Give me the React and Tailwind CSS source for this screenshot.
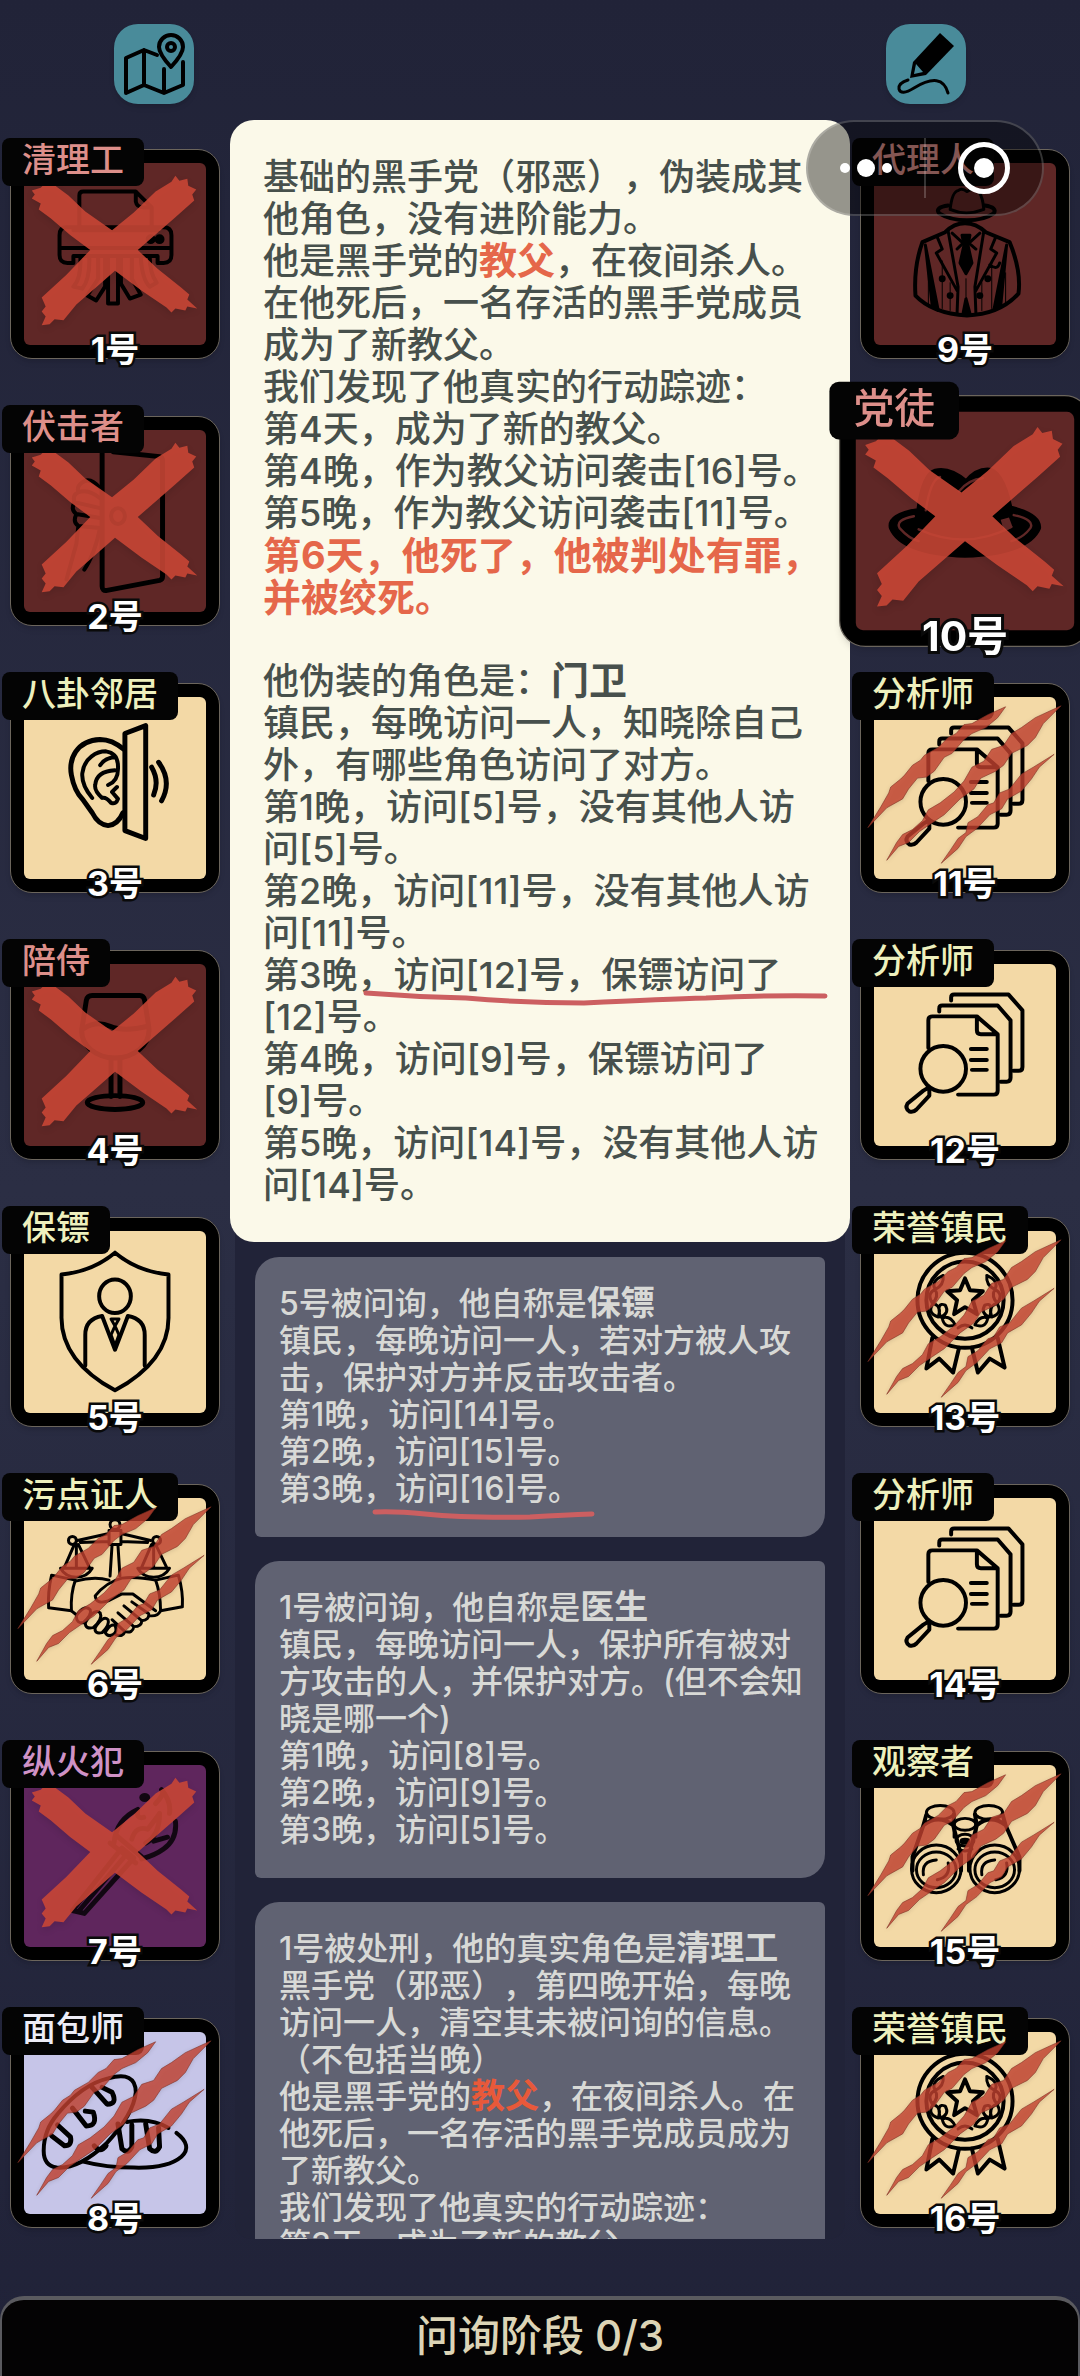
import React, { useState } from "react";
import clsx from "clsx";

const TONES = {
	mafia: { tile: "bg-[#5f2726]", text: "text-[#dd8f8a]" },
	town: { tile: "bg-[#f3d9a6]", text: "text-[#eef0bd]" },
	arson: { tile: "bg-[#5f265d]", text: "text-[#cf92c6]" },
	baker: { tile: "bg-[#c6c5e8]", text: "text-[#ececf6]" },
};

const LEFT = [
	{ no: 1, role: "清理工", tone: "mafia", mark: "cross", icon: Shredder },
	{ no: 2, role: "伏击者", tone: "mafia", mark: "cross", icon: Door },
	{ no: 3, role: "八卦邻居", tone: "town", icon: Ear },
	{ no: 4, role: "陪侍", tone: "mafia", mark: "cross", icon: Wine },
	{ no: 5, role: "保镖", tone: "town", icon: Guard },
	{ no: 6, role: "污点证人", tone: "town", mark: "claw", icon: Handshake },
	{ no: 7, role: "纵火犯", tone: "arson", mark: "cross", icon: Torch },
	{ no: 8, role: "面包师", tone: "baker", mark: "claw", icon: Bread },
];

const RIGHT = [
	{ no: 9, role: "代理人", tone: "mafia", icon: Suit },
	{ no: 10, role: "党徒", tone: "mafia", mark: "cross", icon: Hat },
	{ no: 11, role: "分析师", tone: "town", mark: "claw", icon: Files },
	{ no: 12, role: "分析师", tone: "town", icon: Files },
	{ no: 13, role: "荣誉镇民", tone: "town", mark: "claw", icon: Medal },
	{ no: 14, role: "分析师", tone: "town", icon: Files },
	{ no: 15, role: "观察者", tone: "town", mark: "claw", icon: Binoculars },
	{ no: 16, role: "荣誉镇民", tone: "town", mark: "claw", icon: Medal },
];

function Shredder() {
	return (
		<g>
			<path d="M69 81V46Q69 42 73 42H126L142 58V81M126 42V52Q127 58 134 58H142" />
			<path d="M63 81H148M56 78H154Q162 78 162 86V106Q162 114 154 114H148V107H63V114H57Q49 114 49 106V86Q49 78 56 78M49 99H162" />
			<path d="M70 107Q71 130 63 138L72 140Q80 130 79 107M88 107V130L77 147L86 152L95 138V107M98 107V155H108V107M111 107V135L120 150L131 146L122 130V107M131 107Q132 130 140 138L147 134Q140 124 140 107" />
			<circle cx="141" cy="90" r="3" fill="#000" />
			<circle cx="150" cy="90" r="3" fill="#000" />
		</g>
	);
}

function Door() {
	return (
		<g>
			<path strokeWidth="5" d="M92 33V171Q92 176 97 175L150 165Q153 164 153 161V44Q153 41 150 40L103 35" />
			<ellipse cx="108" cy="100" rx="7" ry="8" />
			<path d="M90 72Q80 60 72 66Q66 70 68 76Q62 78 64 86L90 92M68 76Q78 72 90 82M64 86Q60 94 66 98L90 102M66 98Q62 106 68 110L90 112M68 110L66 128L56 164M90 112Q84 140 74 154" />
		</g>
	);
}

function Ear() {
	return (
		<g>
			<path strokeWidth="5" d="M114 66Q102 56 90 56C66 57 58 76 61 92Q64 108 72 116L82 130Q88 142 98 143Q108 142 113 130" />
			<path d="M82 115Q71 102 72 90C74 74 87 68 96 68Q109 70 108 86Q108 98 98 102M107 104L102 109L108 116Q106 122 101 120Q96 114 92 115Q84 108 85 102Q86 88 105 87M90 82Q95 74 106 74" />
			<path strokeWidth="5" d="M115 50L136 42V156L115 148Z" />
			<path strokeWidth="5" d="M142 84Q150 98 144 112M149 79Q163 98 152 118" />
		</g>
	);
}

function Wine() {
	return (
		<g strokeWidth="5">
			<path d="M82 45H130Q134 45 135 50L139 76C142 96 122 108 105 108S68 96 72 76L76 50Q77 45 82 45Z" />
			<path d="M74 78Q86 70 100 76T138 76M101 110V147M110 110V147" />
			<ellipse cx="105" cy="153" rx="28" ry="7" />
		</g>
	);
}

function Guard() {
	return (
		<g>
			<path d="M105 35Q82 54 51 57V99Q50 144 105 174Q160 144 159 99V57Q128 54 105 35Z" />
			<ellipse cx="105" cy="79" rx="16" ry="17" />
			<path d="M75 149V118Q75 102 92 99L105 133L118 99Q135 102 135 118V149" />
			<path strokeWidth="3" d="M101 102H109L105 109ZM105 109L101 118L105 129L109 118Z" />
		</g>
	);
}

function Handshake() {
	return (
		<g strokeWidth="3">
			<circle cx="105" cy="40" r="5" />
			<path d="M99 46H111V60H99ZM102 61L100 92M108 61L110 92M99 49L67 56M111 49L141 56M99 57L70 58M111 57L138 58" />
			<circle cx="62" cy="56" r="4" />
			<circle cx="147" cy="56" r="4" />
			<path d="M64 60L54 83M66 60V83M68 60L79 83M50 84H82Q77 93 66 93T50 84ZM142 60L132 83M144 60V83M146 60L157 83M128 84H160Q155 93 144 93T128 84Z" />
			<path d="M41 91Q37 108 38 124L61 127Q60 110 65 96ZM169 91Q174 108 173 123L151 127Q151 110 146 96Z" />
			<path d="M65 97Q84 92 99 96M146 96Q126 92 112 94Q96 98 85 112Q86 121 98 117L112 110L123 110L146 127M61 127L66 131M66 132Q74 120 80 126Q82 131 73 139Q66 140 66 132M75 139Q84 124 90 129Q93 135 83 144Q75 146 75 139M85 144Q93 131 98 136Q100 141 92 149Q84 151 85 144M95 149Q101 139 105 142Q108 148 103 151Q98 154 95 149M106 151Q113 154 115 148L102 136M115 148Q123 150 124 143L108 129M124 143Q132 143 132 137L114 122M132 137Q140 136 139 130L122 118M140 132Q148 133 151 127" />
		</g>
	);
}

function Torch() {
	return (
		<g strokeWidth="5" opacity="0.8">
			<path d="M62 160L112 97L124 107L74 163ZM100 92L126 112M106 84L132 106M69 160L116 104" />
			<path d="M104 92Q106 68 128 58Q126 68 134 66M146 52Q156 42 152 38Q162 50 160 62M166 70Q168 88 154 98Q146 104 132 108M122 88Q126 74 138 78Q146 68 150 62Q150 84 136 92M158 86L144 90" />
			<ellipse cx="135" cy="46" rx="3" ry="2" />
		</g>
	);
}

function Bread() {
	return (
		<g>
			<path d="M33 133Q33 112 47 96Q72 66 98 60Q126 52 126 74Q124 96 96 126Q68 152 46 150Q33 148 33 133Z" />
			<path strokeWidth="5" d="M41 118L54 128Q62 128 60 119L47 107M62 90L76 108Q88 108 83 94L75 93M81 68L97 86Q108 86 102 74L92 69M108 106L112 131Q118 137 122 129V107M136 106L140 131Q146 137 150 129L149 110M84 128Q90 136 96 128" />
			<path d="M117 104Q140 99 159 110M167 115Q184 128 172 139Q158 151 124 150Q96 150 73 144" />
		</g>
	);
}

function Suit() {
	return (
		<g strokeWidth="3">
			<path d="M90 60Q92 42 98 41Q102 38 107 42Q114 37 119 42Q123 48 124 60Q106 67 90 60" />
			<path strokeWidth="4" d="M88 56Q74 58 79 64Q90 71 107 71T134 64Q138 58 125 56" />
			<path strokeWidth="4" d="M85 83Q94 74 105 74T126 83L150 93Q162 122 159 145Q140 166 107 167Q72 165 55 147Q53 118 62 93Z" />
			<path fill="#000" d="M65 96L78 162L72 158ZM147 96L134 162L141 158Z" />
			<path d="M88 82L98 138L97 165M124 82L115 138L116 165M77 88L82 100L76 104L97 142M136 88L131 100L137 104L116 142M92 84L103 94L97 100M120 84L109 94L116 100M130 116Q138 122 140 114" />
			<path fill="#000" d="M102 86H110L108 96L112 114L106 125L100 114L104 96ZM106 150L103 165H110Z" />
			<path strokeWidth="1" d="M68 124V156M82 112V160M90 134V162M122 134V162M132 112V160M146 124V156M106 130V148" />
			<circle cx="82" cy="130" r="2" fill="#000" />
			<circle cx="128" cy="130" r="2" fill="#000" />
			<circle cx="90" cy="147" r="2" fill="#000" />
			<circle cx="120" cy="147" r="2" fill="#000" />
		</g>
	);
}

function Hat() {
	return (
		<g>
			<path fill="#000" d="M66 96Q40 100 43 111Q52 132 105 134Q158 132 167 111Q168 100 143 94Q136 62 124 62Q114 62 106 72Q92 60 80 63Q70 66 66 96Z" />
			<path stroke="#5f2726" strokeWidth="2" d="M62 101Q46 104 50 111Q58 120 66 122M146 100Q164 104 160 111Q154 119 144 122M72 96Q76 70 84 68M100 80Q108 70 120 69M66 112Q106 130 144 110" />
			<path fill="#5f2726" stroke="none" d="M135 104L142 102L145 110L138 114Z" />
		</g>
	);
}

function Files() {
	return (
		<g>
			<path d="M68 98V70Q68 66 72 66H117L138 84V141Q138 145 134 145H98M117 66V80Q117 84 121 84H138" />
			<path d="M79 61V58Q79 55 82 55H138L151 70V128Q151 132 147 132H141M91 50V47Q91 44 94 44H149L163 60V117Q163 121 159 121H154M111 99H127M111 110H127M112 120H127" />
			<circle cx="83" cy="119" r="23" />
			<path d="M68 138L63 141L47 154Q44 159 49 162Q53 163 56 160L69 146V140" />
		</g>
	);
}

function Medal() {
	return (
		<g>
			<circle cx="105" cy="83" r="48" />
			<circle cx="105" cy="83" r="39" />
			<path d="M105 61L110 73L123 74L113 83L117 97L105 90L94 97L97 83L87 74L100 73Z" />
			<path strokeWidth="3" d="M83 58Q70 64 75 72Q84 68 83 58M75 72Q66 76 72 86Q79 80 75 72M73 86Q66 96 78 100Q82 90 73 86M80 100Q76 84 85 88Q90 96 80 100M82 101Q84 112 95 108Q90 98 82 101M127 58Q140 64 135 72Q126 68 127 58M135 72Q144 76 138 86Q131 80 135 72M137 86Q144 96 132 100Q128 90 137 86M130 100Q134 84 125 88Q120 96 130 100M128 101Q126 112 115 108Q120 98 128 101M98 111Q105 105 112 111" />
			<path d="M72 121L66 152L79 142L93 156L99 131M112 131L118 156L130 142L145 151L138 121" />
		</g>
	);
}

function Binoculars() {
	return (
		<g strokeWidth="3">
			<ellipse cx="80" cy="61" rx="14" ry="7" />
			<ellipse cx="129" cy="61" rx="14" ry="7" />
			<path strokeWidth="4" d="M66 63L63 74L52 106V120M94 63L93 74L101 104V120M115 63L117 74L109 104V120M143 63L146 74L160 106V120M63 74Q78 62 93 74M117 74Q131 62 146 74" />
			<ellipse cx="76" cy="118" rx="25" ry="24" />
			<ellipse cx="76" cy="119" rx="20" ry="18" />
			<path d="M63 124Q61 110 76 109M88 112Q91 126 77 129" />
			<ellipse cx="135" cy="118" rx="25" ry="24" />
			<ellipse cx="135" cy="119" rx="20" ry="18" />
			<path d="M122 124Q120 110 135 109M147 112Q150 126 136 129" />
			<ellipse cx="105" cy="73" rx="11" ry="6" />
			<ellipse cx="105" cy="89" rx="9" ry="6" />
			<ellipse cx="105" cy="90" rx="4" ry="2" fill="#000" />
			<path d="M94 73V86M116 73V86M98 98Q105 102 112 98" />
		</g>
	);
}

function CrossMark() {
	return (
		<svg viewBox="0 0 210 210" className="absolute inset-0 size-full drop-shadow-md" aria-hidden="true">
			<path
				fill="#cb4736"
				fillOpacity="0.88"
				d="M21 49L24 45L21 41L30 38L35 33L38 36L42 34L58 46L75 62L102 81L124 63L146 42L162 32L166 26L170 31L178 29L179 36L187 40L183 45L185 51L166 68L128 101L148 120L172 139L180 146L178 151L188 160L178 158L176 162L166 160L162 164L157 159L132 142L105 122L82 142L66 156L53 172L44 171L39 176L31 177L35 168L31 163L35 158L31 149L56 126L80 101L60 86L40 69L28 60L30 54Z"
			/>
		</svg>
	);
}

function ClawMark() {
	return (
		<svg viewBox="0 0 210 210" className="absolute inset-0 size-full drop-shadow-sm" aria-hidden="true">
			<g fill="#c2412f" fillOpacity="0.8" stroke="#7e3024" strokeOpacity="0.6">
				<path d="M7 145L20 124L28 110L30 104L40 96L44 92L52 82L60 77L64 72L78 64L88 54L96 50L104 41L112 40L128 31L146 23L138 34L126 44L112 50L104 56L92 70L84 74L74 88L66 94L57 95L48 106L42 116L26 125Z" />
				<path d="M26 178L36 160L42 152L52 147L62 138L68 127L80 120L94 109L104 98L112 84L124 78L132 66L144 62L152 50L162 44L176 34L202 22L184 40L176 54L168 62L152 70L144 82L136 88L121 95L114 106L100 116L84 132L72 140L59 149L48 160L38 164Z" />
				<path d="M81 181L90 168L98 156L106 150L108 140L118 134L128 122L134 120L140 110L150 106L162 91L174 84L195 71L180 84L172 96L162 108L148 116L142 126L130 132L117 146L106 154L98 166Z" />
			</g>
		</svg>
	);
}

function PlayerCard({ player, active, onSelect }) {
	const tone = TONES[player.tone];
	const Icon = player.icon;

	return (
		<button
			type="button"
			onClick={() => onSelect(player.no)}
			className={clsx(
				"relative block size-[210px] shrink-0 rounded-[22px] border border-[#6b655c] bg-black p-[13px] shadow-md",
				active && "z-20 scale-120"
			)}>
			<span className={clsx("block size-full rounded-md", tone.tile)}></span>
			<svg
				viewBox="0 0 210 210"
				className="absolute inset-0 size-full"
				fill="none"
				stroke="#000"
				strokeWidth="4"
				strokeLinecap="round"
				strokeLinejoin="round"
				aria-hidden="true">
				<Icon />
			</svg>
			{player.mark === "cross" && <CrossMark />}
			<span className={clsx("absolute -top-3 -left-[9px] h-12 rounded-lg bg-[#040404] px-5 text-[34px] leading-[44px] whitespace-nowrap", tone.text)}>
				{player.role}
			</span>
			{player.mark === "claw" && <ClawMark />}
			<span className="absolute inset-x-0 -bottom-3 text-center text-[34px] leading-10 font-bold text-white [paint-order:stroke_fill] [-webkit-text-stroke:5px_#0a0a0a]">
				{player.no}号
			</span>
		</button>
	);
}

function PlayerColumn({ players, active, onSelect }) {
	return (
		<div className="flex w-[230px] shrink-0 flex-col items-center gap-[57px] pt-[29px]">
			{players.map((player) => (
				<PlayerCard key={player.no} player={player} active={player.no === active} onSelect={onSelect} />
			))}
		</div>
	);
}

function Underline({ d, className }) {
	return (
		<svg className={clsx("absolute overflow-visible", className)} fill="none" stroke="#cc5f61" strokeWidth="5" strokeLinecap="round" aria-hidden="true">
			<path d={d} />
		</svg>
	);
}

function LogCard({ children }) {
	return (
		<article className="relative shrink-0 rounded-md rounded-tl-3xl rounded-br-3xl bg-[#606272] pt-7 pr-5 pb-[30px] pl-6 text-[32px] leading-[37px] text-[#d8d9d6]">
			{children}
		</article>
	);
}

function Detail() {
	return (
		<section className="relative z-10 rounded-3xl bg-[#fbf9e9] pt-9 pr-7 pb-9 pl-[33px] text-4xl leading-[42px] text-[#47504c]">
			<p>基础的黑手党（邪恶），伪装成其他角色，没有进阶能力。</p>
			<p>
				他是黑手党的<b className="text-[38px] leading-none text-[#e5674a]">教父</b>，在夜间杀人。
			</p>
			<p>在他死后，一名存活的黑手党成员成为了新教父。</p>
			<p>我们发现了他真实的行动踪迹：</p>
			<p>第4天，成为了新的教父。</p>
			<p>第4晚，作为教父访问袭击[16]号。</p>
			<p>第5晚，作为教父访问袭击[11]号。</p>
			<p className="text-[38px] leading-[42px] font-bold text-[#e5674a]">第6天，他死了，他被判处有罪，并被绞死。</p>
			<br />
			<p>
				他伪装的角色是：<b className="text-[38px] leading-none">门卫</b>
			</p>
			<p>镇民，每晚访问一人，知晓除自己外，有哪些角色访问了对方。</p>
			<p>第1晚，访问[5]号，没有其他人访问[5]号。</p>
			<p>第2晚，访问[11]号，没有其他人访问[11]号。</p>
			<p>
				第3晚，访问[12]号，保镖访问了<span className="whitespace-nowrap">[12]号。</span>
			</p>
			<p>
				第4晚，访问[9]号，保镖访问了<span className="whitespace-nowrap">[9]号。</span>
			</p>
			<p>第5晚，访问[14]号，没有其他人访问[14]号。</p>
			<Underline className="top-[870px] left-[136px] h-5 w-[460px]" d="M0 3Q50 7 100 8Q160 13 218 13Q300 9 340 8Q400 5 459 6" />
		</section>
	);
}

function MiniProgramCapsule() {
	return (
		<div className="absolute top-[120px] right-9 z-30 flex h-24 w-[238px] items-center rounded-full border-2 border-white/20 bg-black/40">
			<button type="button" aria-label="更多" className="flex h-full flex-1 items-center justify-center gap-[7px]">
				<span className="size-[10px] rounded-full bg-white"></span>
				<span className="size-[18px] rounded-full bg-white"></span>
				<span className="size-[10px] rounded-full bg-white"></span>
			</button>
			<span className="h-[60px] w-[2px] bg-white/20"></span>
			<button type="button" aria-label="关闭" className="flex h-full flex-1 items-center justify-center">
				<span className="flex size-[52px] items-center justify-center rounded-full border-[5px] border-white">
					<span className="size-5 rounded-full bg-white"></span>
				</span>
			</button>
		</div>
	);
}

export default function App() {
	const [active, setActive] = useState(10);

	return (
		<div className="relative flex h-screen flex-col overflow-hidden bg-linear-to-b from-[#212338] via-[#2b2e44] to-[#202238] font-['Inter','Noto_Sans_CJK_SC',sans-serif] font-medium [text-spacing-trim:space-all]">
			<header className="flex shrink-0 justify-between px-[114px] pt-6 pb-4">
				<button type="button" aria-label="地图" className="size-20 rounded-3xl bg-[#498b9a] shadow-md">
					<svg viewBox="0 0 80 80" fill="none" stroke="#000" strokeWidth="4" strokeLinecap="round" strokeLinejoin="round">
						<path d="M43 31L30 26L12 34V69L30 61L50 69L69 61V38M30 26V61M50 45V69" />
						<path d="M57 43Q45 30 45 23A12 12 0 0 1 69 23Q69 30 57 43Z" />
						<circle cx="57" cy="23" r="4" />
					</svg>
				</button>
				<button type="button" aria-label="画笔" className="size-20 rounded-3xl bg-[#498b9a] shadow-md">
					<svg viewBox="0 0 80 80" fill="none">
						<path fill="#000" d="M54 9L68 22L40 51L24 54L27 38Z" />
						<path fill="#498b9a" d="M30 40L37 48L28 50Z" />
						<path stroke="#000" strokeWidth="3" strokeLinecap="round" d="M22 56Q12 59 13 65Q15 72 28 64Q56 47 62 69" />
					</svg>
				</button>
			</header>

			<main className="flex min-h-0 flex-1">
				<PlayerColumn players={LEFT} active={active} onSelect={setActive} />

				<div className="flex min-w-0 flex-1 flex-col">
					<Detail />
					<div className="mx-[5px] -mt-6 flex min-h-0 flex-1 flex-col gap-6 overflow-hidden rounded-b-2xl bg-[#212338] px-5 pt-[39px]">
						<LogCard>
							<p>
								5号被问询，他自称是<b className="text-[34px] leading-none">保镖</b>
							</p>
							<p>镇民，每晚访问一人，若对方被人攻击，保护对方并反击攻击者。</p>
							<p>第1晚，访问[14]号。</p>
							<p>第2晚，访问[15]号。</p>
							<p>第3晚，访问[16]号。</p>
							<Underline className="top-[252px] left-[120px] h-4 w-[220px]" d="M0 3Q20 2 50 5Q90 9 155 8Q190 6 217 5" />
						</LogCard>
						<LogCard>
							<p>
								1号被问询，他自称是<b className="text-[34px] leading-none">医生</b>
							</p>
							<p>镇民，每晚访问一人，保护所有被对方攻击的人，并保护对方。(但不会知晓是哪一个)</p>
							<p>第1晚，访问[8]号。</p>
							<p>第2晚，访问[9]号。</p>
							<p>第3晚，访问[5]号。</p>
						</LogCard>
						<LogCard>
							<p>
								1号被处刑，他的真实角色是<b className="text-[34px] leading-none">清理工</b>
							</p>
							<p>黑手党（邪恶），第四晚开始，每晚访问一人，清空其未被问询的信息。（不包括当晚）</p>
							<p>
								他是黑手党的<b className="text-[34px] leading-none text-[#e8593a]">教父</b>，在夜间杀人。在他死后，一名存活的黑手党成员成为了新教父。
							</p>
							<p>我们发现了他真实的行动踪迹：</p>
							<p>第3天，成为了新的教父。</p>
						</LogCard>
					</div>
				</div>

				<PlayerColumn players={RIGHT} active={active} onSelect={setActive} />
			</main>

			<footer className="mt-[57px] flex h-20 shrink-0 items-center justify-center rounded-t-3xl border-x-2 border-t-4 border-[#5a5a5f] bg-[#040304] pb-1 text-[42px] leading-none text-[#dcd4b6]">
				问询阶段 0/3
			</footer>

			<MiniProgramCapsule />
		</div>
	);
}
